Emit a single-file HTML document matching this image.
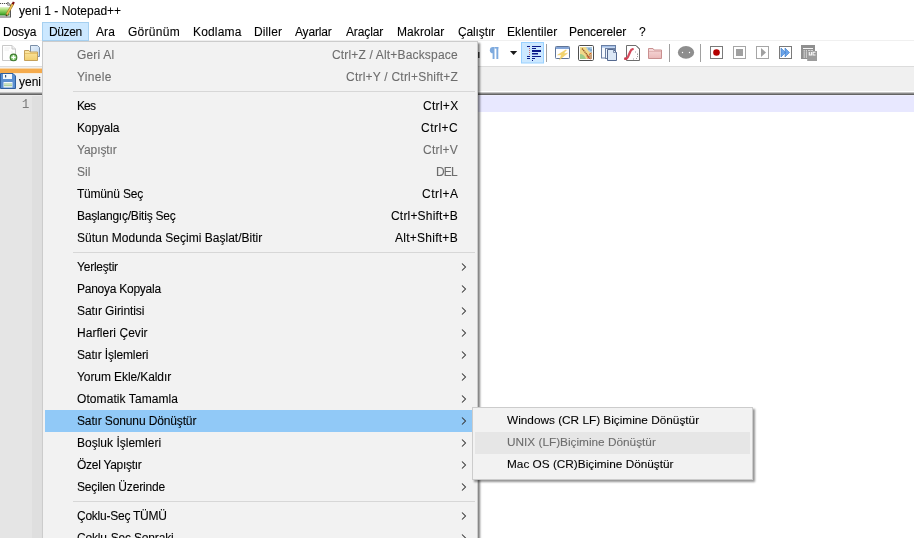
<!DOCTYPE html>
<html><head><meta charset="utf-8">
<style>
*{margin:0;padding:0;box-sizing:border-box}
html,body{width:914px;height:538px;overflow:hidden;background:#fff;font-family:"Liberation Sans",sans-serif;font-size:12px;color:#000;position:relative}
.a,.t,.k{-webkit-text-stroke:0.1px currentColor;will-change:transform}
.a{position:absolute;white-space:pre;line-height:1}
#title{left:19px;top:5px;font-size:12px}
#menubar{position:absolute;left:0;top:21px;width:914px;height:20px;background:#fff;border-bottom:1px solid #f0f0f0}
.mb{position:absolute;top:6px;font-size:12px}
#duzen{position:absolute;left:42px;top:22px;width:47px;height:19px;background:#cce8ff;border:1px solid #a6d0f0}
#toolbar{position:absolute;left:0;top:42px;width:914px;height:25px;background:#fff;border-bottom:1px solid #dcdcdc}
#tabbar{position:absolute;left:0;top:67px;width:914px;height:25px;background:#f0f0f0;border-bottom:1px solid #fff}
#tab{position:absolute;left:0;top:67px;width:42px;height:25px;background:linear-gradient(#f0f0f0 0,#f0f0f0 1px,#f8d4a4 1px,#f8d4a4 2px,#f4aa4c 2px,#f4aa4c 6px,#f9e3c6 6px,#f3f3f3 7px,#f3f3f3 100%)}
#edgeline{position:absolute;left:0;top:92px;width:914px;height:3px;background:linear-gradient(#c4c4c4 0,#c4c4c4 1px,#8c8c8c 1px,#8c8c8c 2px,#646464 2px)}
#margin{position:absolute;left:0;top:95px;width:42px;height:443px;background:linear-gradient(#ebebeb 0,#ebebeb 1px,#e5e5e5 1px)}
#fold{position:absolute;left:32px;top:96px;width:10px;height:442px;background:#dfdfdf}
#ln{left:21.5px;top:98.6px;font-family:"Liberation Mono",monospace;font-size:12px;color:#7c7c7c}
#curline{position:absolute;left:42px;top:95px;width:872px;height:17px;background:linear-gradient(#eeeefe 0,#eeeefe 1px,#e8e8ff 1px)}
#menu{position:absolute;left:42px;top:41px;width:436px;height:510px;background:#f2f2f2;border:1px solid #cccccc;box-shadow:2px 2px 2px rgba(0,0,0,0.5)}
.mi{position:absolute;left:2px;width:430px;height:22px}
.mi .t{position:absolute;left:32px;top:5px;white-space:pre;line-height:1;font-size:12px}
.mi .k{position:absolute;right:17px;top:5px;white-space:pre;line-height:1;font-size:12px}
.mi.d .t,.mi.d .k{color:#6d6d6d}
.mi .ar{position:absolute;left:416px;top:7px;width:6px;height:8px}
.sep{position:absolute;left:30px;width:402px;height:1px;background:#d7d7d7}
.hl{background:#91c9f7}
#sub{position:absolute;left:472px;top:407px;width:281px;height:73px;background:#f2f2f2;border:1px solid #cccccc;box-shadow:2px 2px 2px rgba(0,0,0,0.42)}
.si{position:absolute;left:2px;width:275px;height:22px}
.si .t{position:absolute;left:32px;top:5px;white-space:pre;line-height:1;font-size:11.8px}
.si.d .t{color:#6d6d6d}
.si.d{background:#e6e6e6}
</style></head><body>
<!-- title -->
<svg class="a" style="left:0;top:0" width="20" height="20" viewBox="0 0 20 20">
  <defs><linearGradient id="gg" x1="0" y1="0" x2="0" y2="1"><stop offset="0" stop-color="#e4f6cc"/><stop offset="0.35" stop-color="#a6dc72"/><stop offset="0.8" stop-color="#4eb034"/><stop offset="1" stop-color="#1d7212"/></linearGradient></defs>
  <path d="M0 2 H7.5 L10.5 5 V16.5 H0 Z" fill="#fff"/>
  <path d="M0 3.5 H7" stroke="#505050" stroke-width="1" stroke-dasharray="1.2 0.8"/>
  <path d="M7.5 2 L10.5 5 V17 M0 17 H11" fill="none" stroke="#555" stroke-width="1"/>
  <path d="M7.7 2.5 V5.2 H10.2" fill="none" stroke="#666" stroke-width="0.8"/>
  <rect x="0" y="7" width="9.5" height="8.5" fill="url(#gg)"/>
  <path d="M6.5 15.2 L13 3.6" stroke="#a07a2a" stroke-width="2.5"/>
  <path d="M6.5 15.2 L13 3.6" stroke="#ecc052" stroke-width="1.4"/>
  <path d="M6 16 L7 14.6" stroke="#3a3a20" stroke-width="1.4"/>
  <path d="M12.6 4.3 L13.9 2" stroke="#7a0c0c" stroke-width="2.2"/>
</svg>
<div class="a" id="title">yeni 1 - Notepad++</div>
<div id="menubar"></div>
<div id="duzen"></div>
<div class="a mb" style="left:2.8px;top:26.4px;letter-spacing:-0.125px">Dosya</div>
<div class="a mb" style="left:49.4px;top:26.4px;letter-spacing:-0.375px">Düzen</div>
<div class="a mb" style="left:96.4px;top:26.4px;letter-spacing:0.1px">Ara</div>
<div class="a mb" style="left:128.2px;top:26.4px;letter-spacing:0.283px">Görünüm</div>
<div class="a mb" style="left:192.5px;top:26.4px;letter-spacing:0.167px">Kodlama</div>
<div class="a mb" style="left:253.5px;top:26.4px;letter-spacing:0.12px">Diller</div>
<div class="a mb" style="left:295.2px;top:26.4px;letter-spacing:-0.167px">Ayarlar</div>
<div class="a mb" style="left:345.9px;top:26.4px;letter-spacing:-0.133px">Araçlar</div>
<div class="a mb" style="left:397.4px;top:26.4px;letter-spacing:0.086px">Makrolar</div>
<div class="a mb" style="left:457.9px;top:26.4px;letter-spacing:-0.129px">Çalıştır</div>
<div class="a mb" style="left:507.0px;top:26.4px;letter-spacing:0.111px">Eklentiler</div>
<div class="a mb" style="left:569.0px;top:26.4px;letter-spacing:-0.09px">Pencereler</div>
<div class="a mb" style="left:639px;top:26.4px">?</div>

<div id="toolbar"></div>
<div id="tabbar"></div>
<svg class="a" style="left:0;top:42px" width="914" height="24" viewBox="0 0 914 24">
  <defs>
    <linearGradient id="fold" x1="0" y1="0" x2="0" y2="1"><stop offset="0" stop-color="#fbe7a6"/><stop offset="1" stop-color="#f2cf6e"/></linearGradient>
    <linearGradient id="bdoc" x1="0" y1="0" x2="1" y2="1"><stop offset="0" stop-color="#eaf3fc"/><stop offset="1" stop-color="#b9d3ef"/></linearGradient>
    <linearGradient id="pink" x1="0" y1="0" x2="0" y2="1"><stop offset="0" stop-color="#f7dcdc"/><stop offset="1" stop-color="#eab8b8"/></linearGradient>
    <linearGradient id="map" x1="0" y1="0" x2="1" y2="1"><stop offset="0" stop-color="#f3dd7a"/><stop offset="0.5" stop-color="#d7d36a"/><stop offset="1" stop-color="#8cc07a"/></linearGradient>
  </defs>
  <!-- new file -->
  <path d="M2.5 3.5 H12 L15.5 7 V18.5 H2.5 Z" fill="#fff" stroke="#c9c9c9"/>
  <path d="M12 3.5 V7 H15.5" fill="#f0f0f0" stroke="#c9c9c9"/>
  <path d="M4.5 6 H10 M4.5 8 H9 M11 10 H13" stroke="#eeeeee"/>
  <circle cx="13.5" cy="15.4" r="3.3" fill="#8ccf7c" stroke="#3f7a2f" stroke-width="1.1"/>
  <path d="M13.5 13.3 V17.5 M11.4 15.4 H15.6" stroke="#fff" stroke-width="1.2"/>
  <!-- open -->
  <path d="M30.5 3.5 H37.5 L39.5 5.5 V14.5 H30.5 Z" fill="url(#bdoc)" stroke="#7b8fa8"/>
  <path d="M24.5 8.5 H29 L30 10 H37.5 V18.5 H24.5 Z" fill="url(#fold)" stroke="#c4a05a"/>
  <path d="M25 11.5 H37" stroke="#e3bb5e" stroke-width="0.8"/>
  <!-- hidden icon remnant -->
  <rect x="478" y="10" width="1.5" height="6" fill="#404040"/>
  <!-- pilcrow -->
  <g fill="#7eaade"><path d="M494.5 5 H498.3 V6.6 H494.5 Z"/><rect x="492.6" y="5" width="1.9" height="12"/><rect x="496.4" y="5" width="1.9" height="12"/><path d="M493 5 A3.1 3.1 0 0 0 493 11.3 Z"/></g>
  <!-- dropdown -->
  <path d="M510 9 H517.2 L513.6 13 Z" fill="#1a1a1a"/>
  <!-- wrap button -->
  <rect x="521.5" y="0.5" width="22" height="20.5" fill="#cce8ff" stroke="#99d1ff"/>
  <g fill="#0a1a8a">
    <rect x="527" y="4" width="3" height="1"/><rect x="532" y="4" width="9" height="1"/>
    <rect x="532" y="6" width="4" height="1"/>
    <rect x="532" y="8" width="9" height="2"/>
    <rect x="532" y="11" width="6" height="1.5"/>
    <rect x="527" y="14" width="3" height="1"/><rect x="532" y="14" width="9" height="1"/>
    <rect x="527" y="16" width="3" height="1"/><rect x="532" y="16" width="3" height="1"/>
    <rect x="532" y="18" width="1" height="1"/>
  </g>
  <path d="M529.5 6 V13" stroke="#d05050" stroke-width="0.8" stroke-dasharray="1 1"/>
  <!-- separators -->
  <rect x="546" y="2" width="1" height="18" fill="#a0a0a0"/>
  <rect x="669" y="2" width="1" height="18" fill="#a0a0a0"/>
  <rect x="700" y="2" width="1" height="18" fill="#a0a0a0"/>
  <!-- launch -->
  <rect x="555.5" y="4.5" width="14" height="12" rx="0.8" fill="#fff" stroke="#5f7598"/>
  <rect x="556" y="5" width="13" height="2" fill="#86a6d8"/>
  <path d="M565.5 8 L557.5 13 L561.5 12.8 L559.5 17.8 L567.5 11.2 L563.6 11.5 L566.5 8 Z" fill="#f2d46e" stroke="#e8c65a" stroke-width="0.4"/>
  <!-- map -->
  <rect x="578.5" y="3.5" width="15" height="15" rx="1.2" fill="#fff" stroke="#4e4e4e"/>
  <rect x="580" y="5" width="12" height="12" fill="#efd98a"/>
  <path d="M586 5 H592 V11 Q588 10 586 5 Z" fill="#a9c9e2"/>
  <path d="M580 12 Q584 12 586 17 H580 Z" fill="#9ccb8a"/>
  <path d="M587 17 Q588 13 592 12 V17 Z" fill="#c9a27a"/>
  <path d="M582 6.5 L589 15" stroke="#9a5a2a" stroke-width="1.4" stroke-dasharray="1.4 0.6"/>
  <path d="M586.5 14 L590.5 17 M589 12.5 L591.5 11" stroke="#d24a2a" stroke-width="1"/>
  <path d="M589 6 V8 M591 7 V9" stroke="#4f7fb0" stroke-width="0.8"/>
  <!-- docs -->
  <rect x="601.5" y="3.5" width="14" height="12.5" fill="#f6f9fd" stroke="#6a7fa3"/>
  <rect x="602" y="4" width="13" height="1.6" fill="#a5c0e8"/>
  <rect x="605.5" y="6.5" width="9" height="10" fill="#eef4fb" stroke="#6a7fa3"/>
  <path d="M607.5 7.5 H613.5 L616.5 10.5 V18.5 H607.5 Z" fill="#dce8f6" stroke="#55698f"/>
  <path d="M613.5 7.5 V10.5 H616.5" fill="none" stroke="#55698f" stroke-width="0.7"/>
  <!-- function list -->
  <path d="M626.5 3.5 H636 L639.5 7 V18.5 H626.5 Z" fill="#fff" stroke="#6e6e6e"/>
  <path d="M636 3.5 L639.5 7" fill="none" stroke="#6e6e6e"/>
  <path d="M632.8 7.2 Q631 7.5 630.2 9.8 L627.8 15.2 Q627 16.8 625 17" fill="none" stroke="#d44a5c" stroke-width="2.2" stroke-linecap="round"/>
  <path d="M624.6 15.4 L626.6 17.4" stroke="#c83a4c" stroke-width="1.4"/>
  <g fill="#a0a0a0"><rect x="635" y="9.5" width="1" height="1"/><rect x="637" y="11.5" width="1" height="1.5"/><rect x="637" y="14" width="1" height="1"/><rect x="636" y="16" width="1" height="1"/><rect x="633" y="16.5" width="1" height="1"/></g>
  <!-- pink folder -->
  <path d="M648.5 6.5 H653 L654 8 H661.5 V16.5 H648.5 Z" fill="url(#pink)" stroke="#c99090"/>
  <path d="M649 9.5 H661" stroke="#d9a8a8" stroke-width="0.7"/>
  <!-- gray blob -->
  <ellipse cx="686" cy="10.4" rx="8.1" ry="6.3" fill="#8e8e8e"/>
  <circle cx="682.5" cy="10.5" r="0.7" fill="#fff"/><circle cx="689.5" cy="10.5" r="0.7" fill="#fff"/>
  <!-- record -->
  <rect x="710.5" y="4.5" width="12" height="12" fill="#fff" stroke="#7a7a7a"/>
  <circle cx="716.5" cy="10.5" r="3.3" fill="#b40000"/>
  <!-- stop -->
  <rect x="733.5" y="4.5" width="12" height="12" fill="#fff" stroke="#a6a6a6"/>
  <rect x="736" y="7" width="7" height="7" fill="#a0a0a0"/>
  <!-- play -->
  <rect x="756.5" y="4.5" width="12" height="12" fill="#fff" stroke="#a6a6a6"/>
  <path d="M761 6 L766 10.5 L761 15 Z" fill="#a0a0a0"/>
  <!-- ff -->
  <rect x="779.5" y="4.5" width="12" height="12" fill="#fff" stroke="#7a7a7a"/>
  <path d="M781 6 L785.5 10.5 L781 15 Z M785 6 L789.5 10.5 L785 15 Z" fill="#6aa4ea" stroke="#3a78c8" stroke-width="0.6"/>
  <!-- macro save -->
  <rect x="801" y="3" width="14" height="14" fill="#8f8f8f"/>
  <rect x="803" y="6" width="10" height="1" fill="#f4f4f4"/>
  <g fill="#f0f0f0"><rect x="803.6" y="8.3" width="1.2" height="1.2"/><rect x="805.8" y="8.3" width="1.2" height="1.2"/><rect x="808" y="8.3" width="2" height="1"/><rect x="810.5" y="8.3" width="2.5" height="1"/>
  <rect x="803.6" y="10.4" width="1.2" height="1.2"/><rect x="805.8" y="10.4" width="1.2" height="1.2"/>
  <rect x="803.6" y="12.4" width="1.2" height="1.2"/><rect x="805.8" y="12.4" width="1.2" height="1.2"/>
  <rect x="803.6" y="14.4" width="1.2" height="1.2"/><rect x="805.8" y="14.4" width="1.2" height="1.2"/></g>
  <rect x="807.2" y="9" width="9.8" height="10" fill="#9c9c9c"/>
  <path d="M809.3 10 V13 H811.4 V10 M815.5 10.2 H813 V13 H815.5" fill="none" stroke="#fafafa" stroke-width="1.1"/>
</svg>
<div id="tab"></div>
<div class="a" style="left:19px;top:76px">yeni</div>
<div id="edgeline"></div>
<div id="margin"></div>
<div id="fold"></div>
<div id="curline"></div>
<svg class="a" style="left:0;top:72px" width="18" height="18" viewBox="0 0 18 18">
  <path d="M0.5 1.5 H13 L15.5 4 V16.5 H0.5 Z" fill="#5b8fd0" stroke="#2f5f9f"/>
  <rect x="3" y="2" width="9" height="5" fill="#f4f8fc"/>
  <rect x="5" y="3" width="1.2" height="2.5" fill="#3a5a80"/>
  <rect x="3.5" y="10" width="9" height="5.5" fill="#f4f8fc"/>
  <rect x="4" y="11.5" width="8" height="1" fill="#9cc88a"/>
  <rect x="4" y="13.2" width="8" height="1" fill="#9cc88a"/>
</svg>
<div class="a" id="ln">1</div>

<div id="menu">
<div class="mi d" style="top:2px"><span class="t" style="letter-spacing:0.183px">Geri Al</span><span class="k" style="letter-spacing:0.167px;margin-right:-0.167px">Ctrl+Z / Alt+Backspace</span></div>
<div class="mi d" style="top:24px"><span class="t" style="letter-spacing:0.3px">Yinele</span><span class="k" style="letter-spacing:0.22px;margin-right:-0.22px">Ctrl+Y / Ctrl+Shift+Z</span></div>
<div class="sep" style="top:49px"></div>
<div class="mi" style="top:53px"><span class="t" style="letter-spacing:-0.9px">Kes</span><span class="k" style="letter-spacing:0.3px;margin-right:-0.3px">Ctrl+X</span></div>
<div class="mi" style="top:75px"><span class="t" style="letter-spacing:-0.15px">Kopyala</span><span class="k" style="letter-spacing:0.48px;margin-right:-0.48px">Ctrl+C</span></div>
<div class="mi d" style="top:97px"><span class="t" style="letter-spacing:-0.086px">Yapıştır</span><span class="k" style="letter-spacing:0.24px;margin-right:-0.24px">Ctrl+V</span></div>
<div class="mi d" style="top:119px"><span class="t" style="letter-spacing:0.05px">Sil</span><span class="k" style="letter-spacing:-0.8px;margin-right:0.8px">DEL</span></div>
<div class="mi" style="top:141px"><span class="t" style="letter-spacing:-0.211px">Tümünü Seç</span><span class="k" style="letter-spacing:0.46px;margin-right:-0.46px">Ctrl+A</span></div>
<div class="mi" style="top:163px"><span class="t" style="letter-spacing:-0.217px">Başlangıç/Bitiş Seç</span><span class="k" style="letter-spacing:0.191px;margin-right:-0.191px">Ctrl+Shift+B</span></div>
<div class="mi" style="top:185px"><span class="t" style="letter-spacing:0.016px">Sütun Modunda Seçimi Başlat/Bitir</span><span class="k" style="letter-spacing:0.26px;margin-right:-0.26px">Alt+Shift+B</span></div>
<div class="sep" style="top:210px"></div>
<div class="mi" style="top:214px"><span class="t" style="letter-spacing:-0.225px">Yerleştir</span><svg class="ar" viewBox="0 0 6 8"><path d="M1 0.5 L4.5 4 L1 7.5" fill="none" stroke="#333" stroke-width="1.05"/></svg></div>
<div class="mi" style="top:236px"><span class="t" style="letter-spacing:-0.254px">Panoya Kopyala</span><svg class="ar" viewBox="0 0 6 8"><path d="M1 0.5 L4.5 4 L1 7.5" fill="none" stroke="#333" stroke-width="1.05"/></svg></div>
<div class="mi" style="top:258px"><span class="t" style="letter-spacing:-0.093px">Satır Girintisi</span><svg class="ar" viewBox="0 0 6 8"><path d="M1 0.5 L4.5 4 L1 7.5" fill="none" stroke="#333" stroke-width="1.05"/></svg></div>
<div class="mi" style="top:280px"><span class="t" style="letter-spacing:0.046px">Harfleri Çevir</span><svg class="ar" viewBox="0 0 6 8"><path d="M1 0.5 L4.5 4 L1 7.5" fill="none" stroke="#333" stroke-width="1.05"/></svg></div>
<div class="mi" style="top:302px"><span class="t" style="letter-spacing:-0.136px">Satır İşlemleri</span><svg class="ar" viewBox="0 0 6 8"><path d="M1 0.5 L4.5 4 L1 7.5" fill="none" stroke="#333" stroke-width="1.05"/></svg></div>
<div class="mi" style="top:324px"><span class="t" style="letter-spacing:-0.088px">Yorum Ekle/Kaldır</span><svg class="ar" viewBox="0 0 6 8"><path d="M1 0.5 L4.5 4 L1 7.5" fill="none" stroke="#333" stroke-width="1.05"/></svg></div>
<div class="mi" style="top:346px"><span class="t" style="letter-spacing:0.08px">Otomatik Tamamla</span><svg class="ar" viewBox="0 0 6 8"><path d="M1 0.5 L4.5 4 L1 7.5" fill="none" stroke="#333" stroke-width="1.05"/></svg></div>
<div class="mi hl" style="top:368px"><span class="t" style="letter-spacing:-0.135px">Satır Sonunu Dönüştür</span><svg class="ar" viewBox="0 0 6 8"><path d="M1 0.5 L4.5 4 L1 7.5" fill="none" stroke="#333" stroke-width="1.05"/></svg></div>
<div class="mi" style="top:390px"><span class="t" style="letter-spacing:0.007px">Boşluk İşlemleri</span><svg class="ar" viewBox="0 0 6 8"><path d="M1 0.5 L4.5 4 L1 7.5" fill="none" stroke="#333" stroke-width="1.05"/></svg></div>
<div class="mi" style="top:412px"><span class="t" style="letter-spacing:-0.283px">Özel Yapıştır</span><svg class="ar" viewBox="0 0 6 8"><path d="M1 0.5 L4.5 4 L1 7.5" fill="none" stroke="#333" stroke-width="1.05"/></svg></div>
<div class="mi" style="top:434px"><span class="t" style="letter-spacing:-0.167px">Seçilen Üzerinde</span><svg class="ar" viewBox="0 0 6 8"><path d="M1 0.5 L4.5 4 L1 7.5" fill="none" stroke="#333" stroke-width="1.05"/></svg></div>
<div class="sep" style="top:459px"></div>
<div class="mi" style="top:463px"><span class="t" style="letter-spacing:-0.246px">Çoklu-Seç TÜMÜ</span><svg class="ar" viewBox="0 0 6 8"><path d="M1 0.5 L4.5 4 L1 7.5" fill="none" stroke="#333" stroke-width="1.05"/></svg></div>
<div class="mi" style="top:485px"><span class="t" style="letter-spacing:-0.169px">Çoklu-Seç Sonraki</span><svg class="ar" viewBox="0 0 6 8"><path d="M1 0.5 L4.5 4 L1 7.5" fill="none" stroke="#333" stroke-width="1.05"/></svg></div>
</div>
<div id="sub">
<div class="si" style="top:2px"><span class="t">Windows (CR LF) Biçimine Dönüştür</span></div>
<div class="si d" style="top:24px"><span class="t">UNIX (LF)Biçimine Dönüştür</span></div>
<div class="si" style="top:46px"><span class="t">Mac OS (CR)Biçimine Dönüştür</span></div>
</div>
</body></html>
